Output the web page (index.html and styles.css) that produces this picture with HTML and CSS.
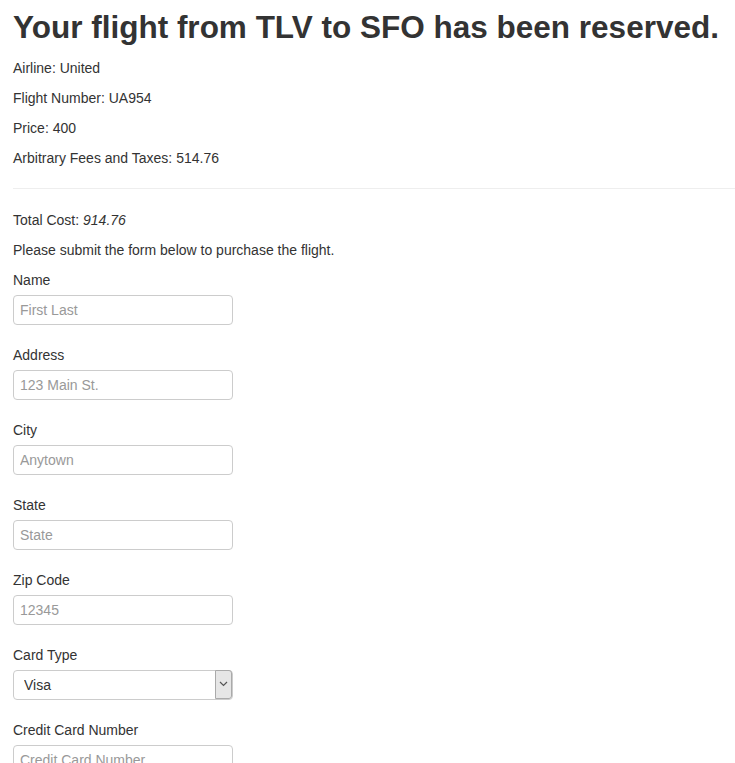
FILE: index.html
```html
<!DOCTYPE html>
<html>
<head>
<meta charset="utf-8">
<link rel="stylesheet" href="styles.css">
</head>
<body>
<div class="page">
  <h1 class="title">Your flight from TLV to SFO has been reserved.</h1>
  <p>Airline: United</p>
  <p>Flight Number: UA954</p>
  <p>Price: 400</p>
  <p>Arbitrary Fees and Taxes: 514.76</p>
  <hr class="rule">
  <p>Total Cost: <em>914.76</em></p>
  <p>Please submit the form below to purchase the flight.</p>
  <form class="form">
    <div class="group">
      <label class="label">Name</label>
      <input class="field" type="text" placeholder="First Last">
    </div>
    <div class="group">
      <label class="label">Address</label>
      <input class="field" type="text" placeholder="123 Main St.">
    </div>
    <div class="group">
      <label class="label">City</label>
      <input class="field" type="text" placeholder="Anytown">
    </div>
    <div class="group">
      <label class="label">State</label>
      <input class="field" type="text" placeholder="State">
    </div>
    <div class="group">
      <label class="label">Zip Code</label>
      <input class="field" type="text" placeholder="12345">
    </div>
    <div class="group">
      <label class="label">Card Type</label>
      <div class="select-wrap">
        <select class="select">
          <option>Visa</option>
          <option>American Express</option>
          <option>Diner's Club</option>
        </select>
        <span class="select-btn">
          <svg width="9" height="6" viewBox="0 0 9 6"><path d="M1 1 L4.5 4.5 L8 1" fill="none" stroke="#555" stroke-width="1.2"/></svg>
        </span>
      </div>
    </div>
    <div class="group">
      <label class="label">Credit Card Number</label>
      <input class="field" type="text" placeholder="Credit Card Number">
    </div>
    <div class="group">
      <label class="label">Month</label>
      <input class="field" type="text" placeholder="12">
    </div>
  </form>
</div>
</body>
</html>
```

FILE: styles.css
```css
html, body {
  margin: 0;
  padding: 0;
  background: #fff;
}
body {
  font-family: "Liberation Sans", Arial, Helvetica, sans-serif;
  font-size: 14px;
  line-height: 20px;
  color: #333;
}
.page {
  padding: 10px 0 0 13px;
}
.title {
  font-size: 31.5px;
  font-weight: bold;
  line-height: 1.1;
  margin: 0 0 13px 0;
  white-space: nowrap;
}
p {
  margin: 0 0 10px 0;
}
.rule {
  margin: 20px 0 21px 0;
  border: 0;
  border-top: 1px solid #eee;
  height: 0;
}
.form {
  margin: 0;
}
.group {
  margin-bottom: 20px;
}
.label {
  display: block;
  margin-bottom: 5px;
}
.field, .select {
  box-sizing: border-box;
  display: block;
  width: 220px;
  height: 30px;
  padding: 4px 6px;
  font-family: "Liberation Sans", Arial, Helvetica, sans-serif;
  font-size: 14px;
  color: #555;
  background: #fff;
  border: 1px solid #ccc;
  border-radius: 4px;
  outline: none;
}
.field::placeholder {
  color: #999;
}
.select-wrap {
  position: relative;
  width: 220px;
}
.select {
  -webkit-appearance: none;
  appearance: none;
  padding-left: 10px;
  color: #333;
}
.select-btn {
  position: absolute;
  top: 0;
  right: 1px;
  width: 17px;
  height: 29px;
  background: #e6e6e6;
  border: 1px solid #aaa;
  border-radius: 0 3px 3px 0;
  box-sizing: border-box;
  display: flex;
  align-items: center;
  justify-content: center;
  pointer-events: none;
}
```
